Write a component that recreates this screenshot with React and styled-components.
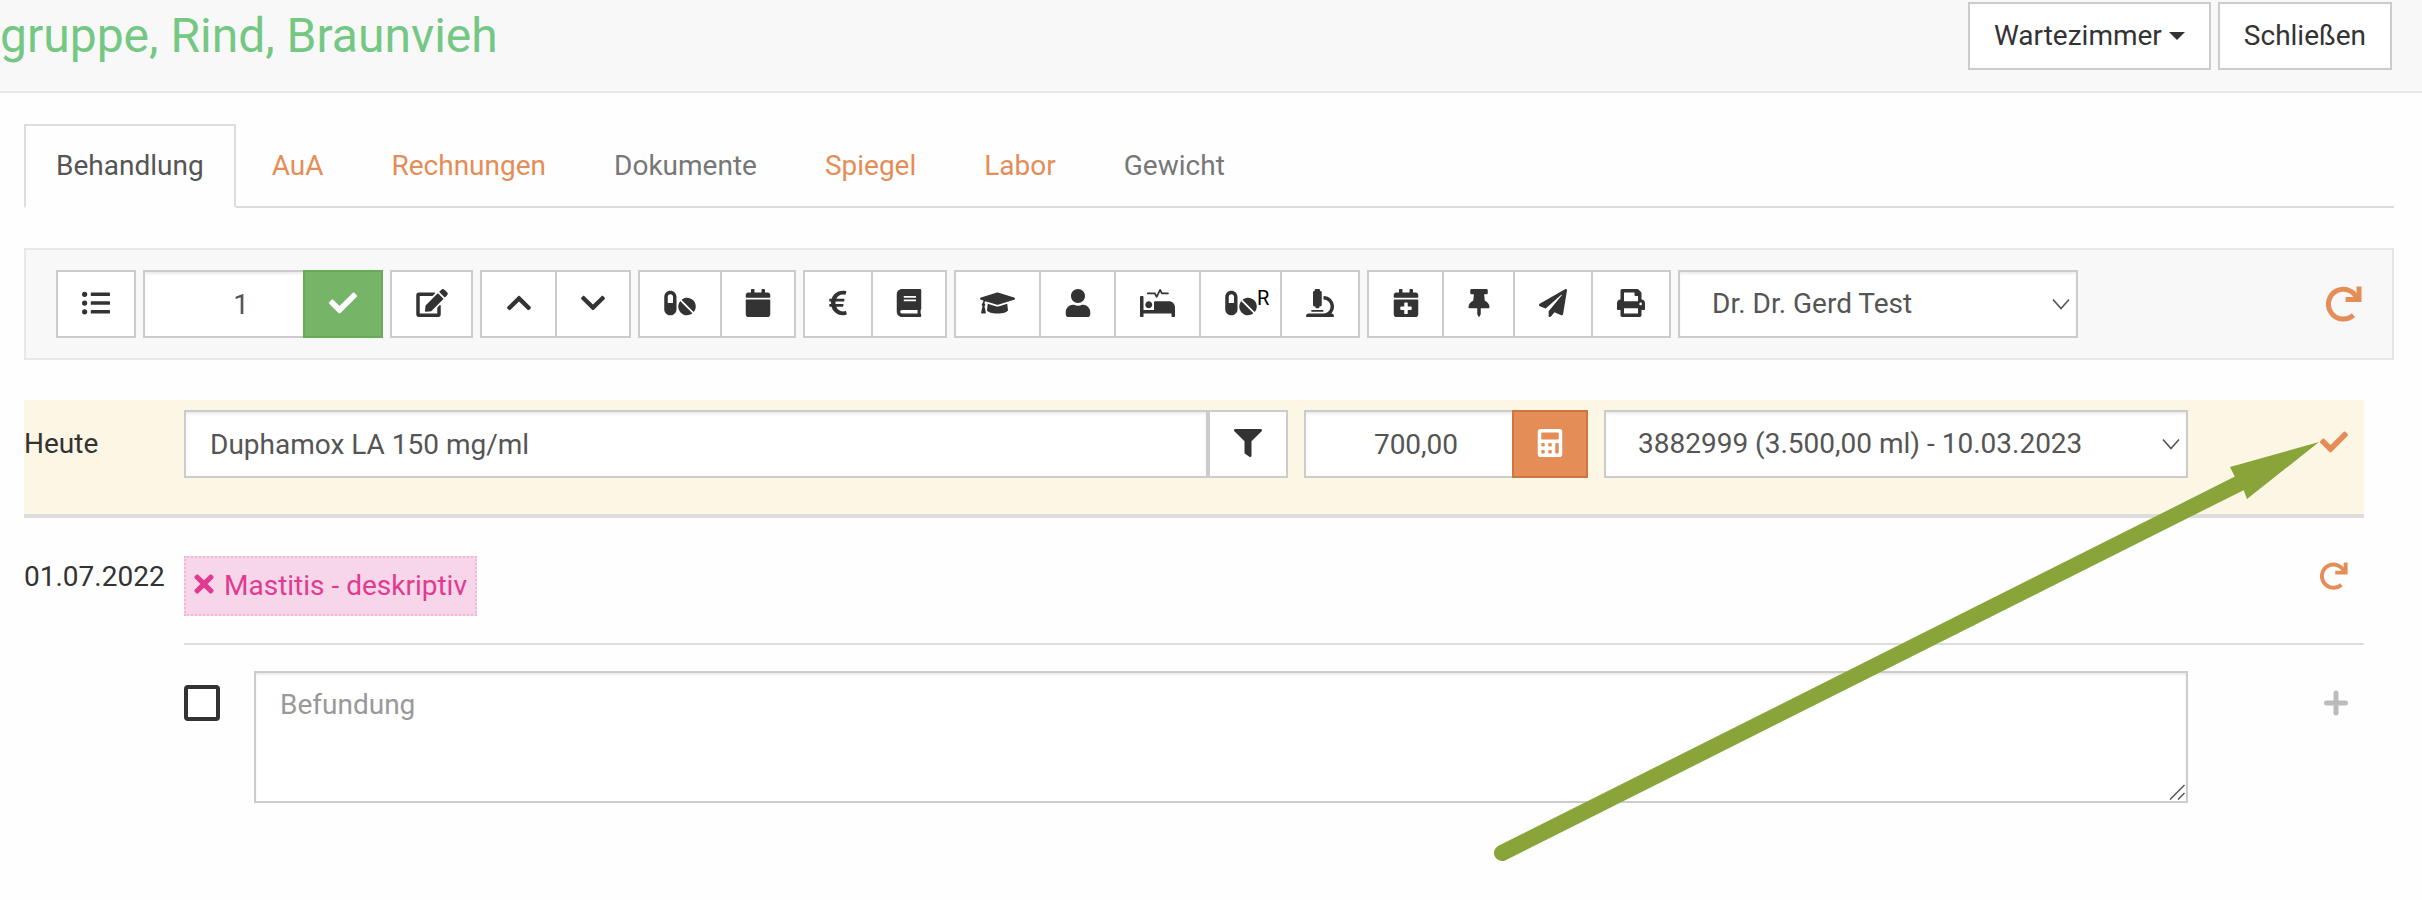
import React from "react";
import styled, { createGlobalStyle, css } from "styled-components";
import {
  FaListUl, FaCheck, FaEdit, FaChevronUp, FaChevronDown, FaPills, FaCalendar,
  FaEuroSign, FaBook, FaGraduationCap, FaUser, FaProcedures, FaMicroscope,
  FaCalendarPlus, FaThumbtack, FaPaperPlane, FaPrint, FaFilter, FaCalculator, FaTimes,
} from "react-icons/fa";

const color = {
  page: "#fefefe",
  text: "#333",
  field: "#555",
  border: "#ccc",
  rule: "#ddd",
  orange: "#e58d57",
  orangeDark: "#cd7640",
  green: "#76b567",
  greenDark: "#67ab57",
  panel: "#f8f8f8",
  panelBorder: "#e7e7e7",
};

const GlobalStyle = createGlobalStyle`
  *, *::before, *::after { box-sizing: border-box; }
  body {
    margin: 0;
    background: ${color.page};
    color: ${color.text};
    font: 400 28px/40px Roboto, "Liberation Sans", sans-serif;
  }
  button, input, select, textarea { font: inherit; border-radius: 0; margin: 0; }
`;

const Header = styled.header`
  display: flex;
  justify-content: space-between;
  align-items: flex-start;
  padding: 2px 30px 21px 0;
  background: ${color.panel};
  border-bottom: 2px solid ${color.panelBorder};
`;

const Title = styled.h1`
  margin: 0;
  font-size: 48px;
  line-height: 68px;
  font-weight: 400;
  color: #75c883;
`;

const HeaderActions = styled.div`
  display: flex;
  gap: 7px;
`;

const tones = {
  plain: css`background: #fff; border-color: ${color.border}; color: ${color.text};`,
  success: css`background: ${color.green}; border-color: ${color.greenDark}; color: #fff;`,
  warning: css`background: ${color.orange}; border-color: ${color.orangeDark}; color: #fff;`,
};

const Button = styled.button`
  display: inline-flex;
  align-items: center;
  justify-content: center;
  flex: none;
  height: 68px;
  padding: 0 24px;
  border: 2px solid;
  cursor: pointer;
  ${({ $tone = "plain" }) => tones[$tone]}
`;

const IconButton = styled(Button)`
  width: ${({ $width = 80 }) => $width}px;
  padding: 0 0 3px ${({ $start }) => ($start ? 24 : 0)}px;
  justify-content: ${({ $start }) => ($start ? "flex-start" : "center")};

  svg {
    display: block;
    flex: none;
    width: ${({ $icon = 28 }) => $icon}px;
    height: 28px;
  }
`;

const Caret = styled.span`
  margin-left: 7px;
  border: 8px solid transparent;
  border-top-color: currentColor;
  border-bottom: 0;
`;

const Main = styled.main`
  padding: 31px 28px 96px 24px;
`;

const Tabs = styled.nav`
  display: flex;
  gap: 4px;
  border-bottom: 2px solid ${color.rule};
`;

const Tab = styled.a`
  margin-bottom: -2px;
  padding: 20px 30px;
  border: 2px solid transparent;
  color: ${({ $tone }) => ($tone === "orange" ? color.orange : "#777")};
  text-decoration: none;

  &[aria-current="page"] {
    background: ${color.page};
    border-color: ${color.rule} ${color.rule} ${color.page};
    color: ${color.field};
  }
`;

const Toolbar = styled.div`
  display: flex;
  align-items: center;
  gap: 7px;
  margin-top: 40px;
  padding: 20px 30px;
  background: ${color.panel};
  border: 2px solid ${color.panelBorder};
`;

const Group = styled.div`
  display: flex;

  ${IconButton} + ${IconButton} {
    margin-left: -2px;
  }
`;

const Superscript = styled.sup`
  align-self: flex-start;
  margin-top: 14px;
  font-size: 20px;
  line-height: 24px;
  color: #000;
`;

const field = css`
  height: 68px;
  background-color: #fff;
  border: 2px solid ${color.border};
  box-shadow: inset 0 2px 2px rgba(0, 0, 0, 0.075);
  color: ${color.field};
  outline: none;
`;

const TextField = styled.input`
  ${field}
  flex: 1;
  min-width: 0;
  padding: 0 24px;
`;

const NumberField = styled.input`
  ${field}
  flex: ${({ $grow }) => ($grow ? "1 1 0" : "none")};
  min-width: 0;
  width: 160px;
  padding: 0 8px 0 ${({ $indent }) => $indent}px;
  border-right: 0;
  text-align: center;
`;

const SelectBox = styled.div`
  display: grid;
  align-items: center;
  width: ${({ $width }) => $width};

  > * { grid-area: 1 / 1; }
  svg {
    justify-self: end;
    margin-right: 8px;
    pointer-events: none;
  }
`;

const Select = styled.select`
  ${field}
  width: 100%;
  padding: 0 40px 0 32px;
  appearance: none;
`;

const Spacer = styled.div`
  flex: 1;
`;

const LinkButton = styled.button`
  display: block;
  padding: 0;
  border: 0;
  background: none;
  color: ${({ $muted }) => ($muted ? "#bbb" : color.orange)};
  cursor: pointer;

  svg {
    display: block;
    width: auto;
    height: ${({ $size = 28 }) => $size}px;
  }
`;

const Entries = styled.div`
  margin: 40px 30px 0 0;
`;

const Entry = styled.section`
  display: grid;
  grid-template-columns: 160px minmax(0, 1fr);
`;

const TodayEntry = styled(Entry)`
  position: relative;
  padding: 10px 0 36px;
  background: #fbf7e4;
  border-bottom: 4px solid ${color.rule};
`;

const DateLabel = styled.div`
  padding-top: ${({ $top }) => $top}px;
  white-space: nowrap;
`;

const Columns = styled.div`
  display: grid;
  grid-template-columns: 1104fr 284fr 584fr 160fr;
  column-gap: 16px;
`;

const InputGroup = styled.div`
  display: flex;
`;

const Action = styled.div`
  display: flex;
  justify-content: flex-end;
  align-items: flex-start;
  padding: ${({ $top }) => $top}px 16px 0 0;
`;

const Arrow = styled.svg`
  position: absolute;
  top: 40px;
  right: 44px;
  width: 830px;
  height: 424px;
  pointer-events: none;
`;

const Diagnosis = styled.div`
  display: flex;
  justify-content: space-between;
  align-items: flex-start;
  padding: 38px 0 27px;
  border-bottom: 2px solid ${color.rule};
`;

const Tag = styled.span`
  display: flex;
  align-items: center;
  gap: 10px;
  padding: 8px;
  background: #f8d6ea;
  border: 2px dotted #f3b5da;
  color: #e03a91;
`;

const TagRemove = styled.button`
  padding: 0 0 4px;
  border: 0;
  background: none;
  color: inherit;
  cursor: pointer;

  svg {
    display: block;
    width: 20px;
    height: 28px;
  }
`;

const Finding = styled.div`
  display: grid;
  grid-template-columns: 70px minmax(0, 1934fr) 176fr;
  align-items: start;
  padding-top: 26px;
`;

const Checkbox = styled.input`
  appearance: none;
  width: 36px;
  height: 36px;
  border: 4px solid ${color.text};
  background: #fff;

  && { margin-top: 14px; border-radius: 4px; }
`;

const FindingBox = styled.div`
  display: grid;

  > * { grid-area: 1 / 1; }
  svg {
    align-self: end;
    justify-self: end;
    margin: 0 3px 3px 0;
    pointer-events: none;
  }
`;

const FindingText = styled.textarea`
  ${field}
  display: block;
  width: 100%;
  height: 132px;
  padding: 12px 24px;
  resize: vertical;

  &::placeholder { color: #999; opacity: 1; }
  &::-webkit-resizer { background: transparent; }
`;

const Chevron = () => (
  <svg width="18" height="12" viewBox="0 0 18 12" fill="none" stroke="#555" strokeWidth="1.6" aria-hidden="true">
    <path d="M1 1.5 9 10.5 17 1.5" />
  </svg>
);

const ResizeGrip = () => (
  <svg width="16" height="16" viewBox="0 0 16 16" stroke="#555" strokeWidth="1.5" aria-hidden="true">
    <path d="M1 15.5 15.5 1M9 15.5 15.5 9" />
  </svg>
);

const RedoIcon = () => (
  <svg viewBox="0 0 36 36" fill="none" stroke="currentColor" strokeWidth="5" aria-hidden="true">
    <path d="M27.4 29.2A14.9 14.9 0 1 1 31.5 13.5" />
    <path d="M33 0.5V13.6H19.6" strokeLinejoin="miter" />
  </svg>
);

const PlusIcon = () => (
  <svg viewBox="0 0 24 28" fill="none" stroke="currentColor" strokeWidth="5" strokeLinecap="round" aria-hidden="true">
    <path d="M12 4V24M2.5 14H21.5" />
  </svg>
);

const tabs = [
  { label: "Behandlung", active: true },
  { label: "AuA", tone: "orange" },
  { label: "Rechnungen", tone: "orange" },
  { label: "Dokumente" },
  { label: "Spiegel", tone: "orange" },
  { label: "Labor", tone: "orange" },
  { label: "Gewicht" },
];

const toolGroups = [
  [
    { label: "Nach oben", icon: FaChevronUp, width: 77 },
    { label: "Nach unten", icon: FaChevronDown, width: 76 },
  ],
  [
    { label: "Medikamente", icon: FaPills, width: 84, iconWidth: 32 },
    { label: "Kalender", icon: FaCalendar, width: 76 },
  ],
  [
    { label: "Leistungen", icon: FaEuroSign, width: 70 },
    { label: "Katalog", icon: FaBook, width: 76 },
  ],
  [
    { label: "Diagnose", icon: FaGraduationCap, width: 87, iconWidth: 35 },
    { label: "Patient", icon: FaUser, width: 77 },
    { label: "Station", icon: FaProcedures, width: 87, iconWidth: 35 },
    { label: "Rezept", icon: FaPills, width: 83, iconWidth: 32, sup: "R" },
    { label: "Labor", icon: FaMicroscope, width: 80 },
  ],
  [
    { label: "Termin", icon: FaCalendarPlus, width: 77 },
    { label: "Anheften", icon: FaThumbtack, width: 73 },
    { label: "Senden", icon: FaPaperPlane, width: 80 },
    { label: "Drucken", icon: FaPrint, width: 80 },
  ],
];

export default function App() {
  return (
    <>
      <GlobalStyle />
      <Header>
        <Title>gruppe, Rind, Braunvieh</Title>
        <HeaderActions>
          <Button type="button">Wartezimmer<Caret /></Button>
          <Button type="button">Schließen</Button>
        </HeaderActions>
      </Header>
      <Main>
        <Tabs>
          {tabs.map((tab) => (
            <Tab key={tab.label} href="#" $tone={tab.tone} aria-current={tab.active ? "page" : undefined}>
              {tab.label}
            </Tab>
          ))}
        </Tabs>

        <Toolbar>
          <IconButton type="button" aria-label="Liste"><FaListUl /></IconButton>
          <Group>
            <NumberField aria-label="Anzahl" defaultValue="1" $indent={42} />
            <IconButton type="button" $tone="success" aria-label="Bestätigen"><FaCheck /></IconButton>
          </Group>
          <IconButton type="button" $width={83} $icon={32} aria-label="Bearbeiten"><FaEdit /></IconButton>
          {toolGroups.map((group) => (
            <Group key={group[0].label}>
              {group.map(({ label, icon: Icon, width, iconWidth, sup }) => (
                <IconButton
                  key={label}
                  type="button"
                  $width={width}
                  $icon={iconWidth}
                  $start={Boolean(sup)}
                  aria-label={label}
                >
                  <Icon />
                  {sup && <Superscript>{sup}</Superscript>}
                </IconButton>
              ))}
            </Group>
          ))}
          <SelectBox $width="400px">
            <Select aria-label="Tierarzt"><option>Dr. Dr. Gerd Test</option></Select>
            <Chevron />
          </SelectBox>
          <Spacer />
          <LinkButton type="button" $size={36} aria-label="Neu laden"><RedoIcon /></LinkButton>
        </Toolbar>

        <Entries>
          <TodayEntry>
            <DateLabel $top={14}>Heute</DateLabel>
            <Columns>
              <InputGroup>
                <TextField aria-label="Artikel" defaultValue="Duphamox LA 150 mg/ml" />
                <IconButton type="button" aria-label="Filter"><FaFilter /></IconButton>
              </InputGroup>
              <InputGroup>
                <NumberField aria-label="Menge" defaultValue="700,00" $grow $indent={22} />
                <IconButton type="button" $tone="warning" $width={76} aria-label="Rechner"><FaCalculator /></IconButton>
              </InputGroup>
              <SelectBox $width="100%">
                <Select aria-label="Charge"><option>3882999 (3.500,00 ml) - 10.03.2023</option></Select>
                <Chevron />
              </SelectBox>
              <Action $top={18}>
                <LinkButton type="button" aria-label="Übernehmen"><FaCheck /></LinkButton>
              </Action>
            </Columns>
            <Arrow viewBox="0 0 830 424" aria-hidden="true">
              <path d="M12 413 750 43" stroke="#89a53a" strokeWidth="16" strokeLinecap="round" />
              <path d="M829 2 740 27 746 39 754 51 757 59Z" fill="#89a53a" />
            </Arrow>
          </TodayEntry>

          <Entry>
            <DateLabel $top={39}>01.07.2022</DateLabel>
            <div>
              <Diagnosis>
                <Tag>
                  <TagRemove type="button" aria-label="Entfernen"><FaTimes /></TagRemove>
                  Mastitis - deskriptiv
                </Tag>
                <Action $top={6}>
                  <LinkButton type="button" aria-label="Wiederholen"><RedoIcon /></LinkButton>
                </Action>
              </Diagnosis>
              <Finding>
                <Checkbox type="checkbox" aria-label="Befundung auswählen" />
                <FindingBox>
                  <FindingText aria-label="Befundung" placeholder="Befundung" />
                  <ResizeGrip />
                </FindingBox>
                <Action $top={18}>
                  <LinkButton type="button" $muted aria-label="Hinzufügen"><PlusIcon /></LinkButton>
                </Action>
              </Finding>
            </div>
          </Entry>
        </Entries>
      </Main>
    </>
  );
}
